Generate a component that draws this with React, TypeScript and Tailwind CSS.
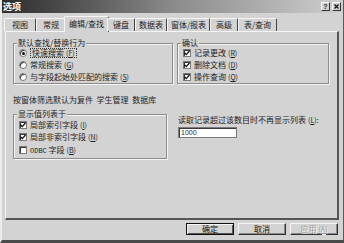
import React from "react";

const M = ({ c }: { c: string }) => (
  <span className="ml-[2px] text-[7px]">
    (<span className="underline">{c}</span>)
  </span>
);

const Radio = ({ on }: { on?: boolean }) => (
  <span className="w-[8px] h-[8px] shrink-0 rounded-full bg-white border border-[#7a7a7a] shadow-[inset_1px_1px_0_#3a3a3a] flex items-center justify-center">
    {on && <span className="w-[3px] h-[3px] rounded-full bg-[#111]" />}
  </span>
);

const Check = ({ on }: { on?: boolean }) => (
  <span className="w-[8px] h-[8px] shrink-0 bg-white border border-[#7a7a7a] shadow-[inset_1px_1px_0_#3a3a3a] flex items-center justify-center">
    {on && (
      <svg width="6" height="6" viewBox="0 0 6 6">
        <path d="M0.5 2.8 L2.3 4.6 L5.5 1" stroke="#111" strokeWidth="1.3" fill="none" />
      </svg>
    )}
  </span>
);

const Group = ({ label, w, h, children }: { label: string; w: string; h: string; children: React.ReactNode }) => (
  <div className={`${w} ${h} border border-[#8c8c8c] shadow-[inset_1px_1px_0_#f4f4f4,1px_1px_0_#f4f4f4] flex flex-col`}>
    <div className="-mt-[6px] ml-[3px] px-[1px] w-fit h-[10px] leading-[10px] bg-[#d3d3d3]">{label}</div>
    {children}
  </div>
);

const Row = ({ children, cls = "" }: { children: React.ReactNode; cls?: string }) => (
  <div className={`h-[12px] flex items-center gap-[3px] pl-[5px] ${cls}`}>{children}</div>
);

const tabs = [
  { t: "视图", w: "w-[32px]" },
  { t: "常规", w: "w-[30px]" },
  { t: "编辑/查找", w: "w-[45px]", sel: true },
  { t: "键盘", w: "w-[28px]" },
  { t: "数据表", w: "w-[32px]" },
  { t: "窗体/报表", w: "w-[43px]" },
  { t: "高级", w: "w-[28px]" },
  { t: "表/查询", w: "w-[39px]" },
];

const Btn = ({ children, def, dis }: { children: React.ReactNode; def?: boolean; dis?: boolean }) => (
  <div
    className={`w-[48px] h-[12px] flex items-center justify-center bg-[#d3d3d3] border ${
      def
        ? "border-[#111] shadow-[inset_1px_1px_0_#f6f6f6,inset_-1px_-1px_0_#555]"
        : "border-t-[#f6f6f6] border-l-[#f6f6f6] border-r-[#333] border-b-[#333] shadow-[inset_-1px_-1px_0_#888]"
    } ${dis ? "text-[#9a9a9a] [text-shadow:1px_1px_0_#fafafa]" : "text-[#111]"}`}
  >
    {children}
  </div>
);

export default function App() {
  return (
    <div className="w-[344px] h-[243px] overflow-hidden bg-[#d3d3d3] text-[#1e1e1e] text-[8px] leading-[10px] font-['Noto_Sans_CJK_SC',sans-serif] border-l-2 border-l-[#ececec] border-b-[3px] border-b-[#4a4a4a] border-r border-r-[#5a5a5a] flex flex-col">
      {/* title bar */}
      <div className="h-[13px] shrink-0 -ml-[2px] bg-gradient-to-r from-[#2c2c2c] via-[#8a8a8a] to-[#cfcfcf] flex items-center justify-between pl-[3px] pr-[2px]">
        <span className="text-white font-bold text-[9px] leading-[11px]">选项</span>
        <div className="flex gap-[2px]">
          <div className="w-[9px] h-[9px] bg-[#d3d3d3] border border-t-[#f6f6f6] border-l-[#f6f6f6] border-r-[#333] border-b-[#333] flex items-center justify-center text-[7px] leading-[7px] font-bold font-['Liberation_Sans',sans-serif]">?</div>
          <div className="w-[9px] h-[9px] bg-[#d3d3d3] border border-t-[#f6f6f6] border-l-[#f6f6f6] border-r-[#333] border-b-[#333] flex items-center justify-center">
            <svg width="5" height="5" viewBox="0 0 5 5">
              <path d="M0.5 0.5 L4.5 4.5 M4.5 0.5 L0.5 4.5" stroke="#111" strokeWidth="1.2" />
            </svg>
          </div>
        </div>
      </div>

      {/* tabs */}
      <div className="h-[18px] shrink-0 flex items-end pl-[2px] relative z-10">
        {tabs.map((tb) =>
          tb.sel ? (
            <div
              key={tb.t}
              className={`${tb.w} -mx-[2px] h-[16px] -mb-px pb-[2px] bg-[#d3d3d3] border-t border-l border-[#f6f6f6] border-r border-r-[#444] rounded-t-[2px] flex items-center justify-center`}
            >
              {tb.t}
            </div>
          ) : (
            <div
              key={tb.t}
              className={`${tb.w} h-[13px] bg-[#d3d3d3] border-t border-l border-[#f6f6f6] border-r border-r-[#444] rounded-t-[2px] flex items-center justify-center`}
            >
              {tb.t}
            </div>
          )
        )}
      </div>

      {/* panel */}
      <div className="ml-[3px] w-[334px] h-[189px] shrink-0 border-t border-l border-[#f6f6f6] border-r-2 border-b-2 border-r-[#555] border-b-[#555] flex flex-col">
        <div className="flex mt-[11px] ml-[7px] gap-[4px]">
          <Group label="默认查找/替换行为" w="w-[160px]" h="h-[41px]">
            <Row cls="-mt-px">
              <Radio on />
              <span className="border border-dotted border-[#333] px-px leading-[8px]">
                快速搜索<M c="F" />
              </span>
            </Row>
            <Row>
              <Radio />
              <span>
                常规搜索<M c="G" />
              </span>
            </Row>
            <Row>
              <Radio />
              <span>
                与字段起始处匹配的搜索<M c="S" />
              </span>
            </Row>
          </Group>
          <Group label="确认" w="w-[152px]" h="h-[41px]">
            <Row cls="-mt-px">
              <Check on />
              <span>
                记录更改<M c="R" />
              </span>
            </Row>
            <Row>
              <Check on />
              <span>
                删除文档<M c="D" />
              </span>
            </Row>
            <Row>
              <Check on />
              <span>
                操作查询<M c="Q" />
              </span>
            </Row>
          </Group>
        </div>

        <div className="ml-[7px] mt-[11px] h-[10px]">按窗体筛选默认为复件&nbsp;&nbsp;学生管理&nbsp;&nbsp;数据库</div>

        <div className="flex ml-[7px] mt-[9px] items-start">
          <Group label="显示值列表于" w="w-[154px]" h="h-[45px]">
            <Row>
              <Check on />
              <span>
                局部索引字段<M c="I" />
              </span>
            </Row>
            <Row>
              <Check on />
              <span>
                局部非索引字段<M c="N" />
              </span>
            </Row>
            <Row cls="mt-px">
              <Check />
              <span>
                <span className="font-['Liberation_Mono',monospace] text-[7px]">ODBC</span> 字段<M c="B" />
              </span>
            </Row>
          </Group>
          <div className="ml-[11px] mt-[1px] flex flex-col">
            <div className="h-[10px]">
              读取记录超过该数目时不再显示列表<M c="L" />:
            </div>
            <div className="mt-[2px] w-[59px] h-[11px] bg-white border border-[#7a7a7a] shadow-[inset_1px_1px_0_#3a3a3a] pl-[2px] flex items-center text-[7px] font-['Liberation_Sans',sans-serif]">
              1000
            </div>
          </div>
        </div>
      </div>

      {/* buttons */}
      <div className="flex justify-end gap-[4px] pr-[5px] mt-[3px]">
        <Btn def>确定</Btn>
        <Btn>取消</Btn>
        <Btn dis>
          应用<M c="A" />
        </Btn>
      </div>
    </div>
  );
}
